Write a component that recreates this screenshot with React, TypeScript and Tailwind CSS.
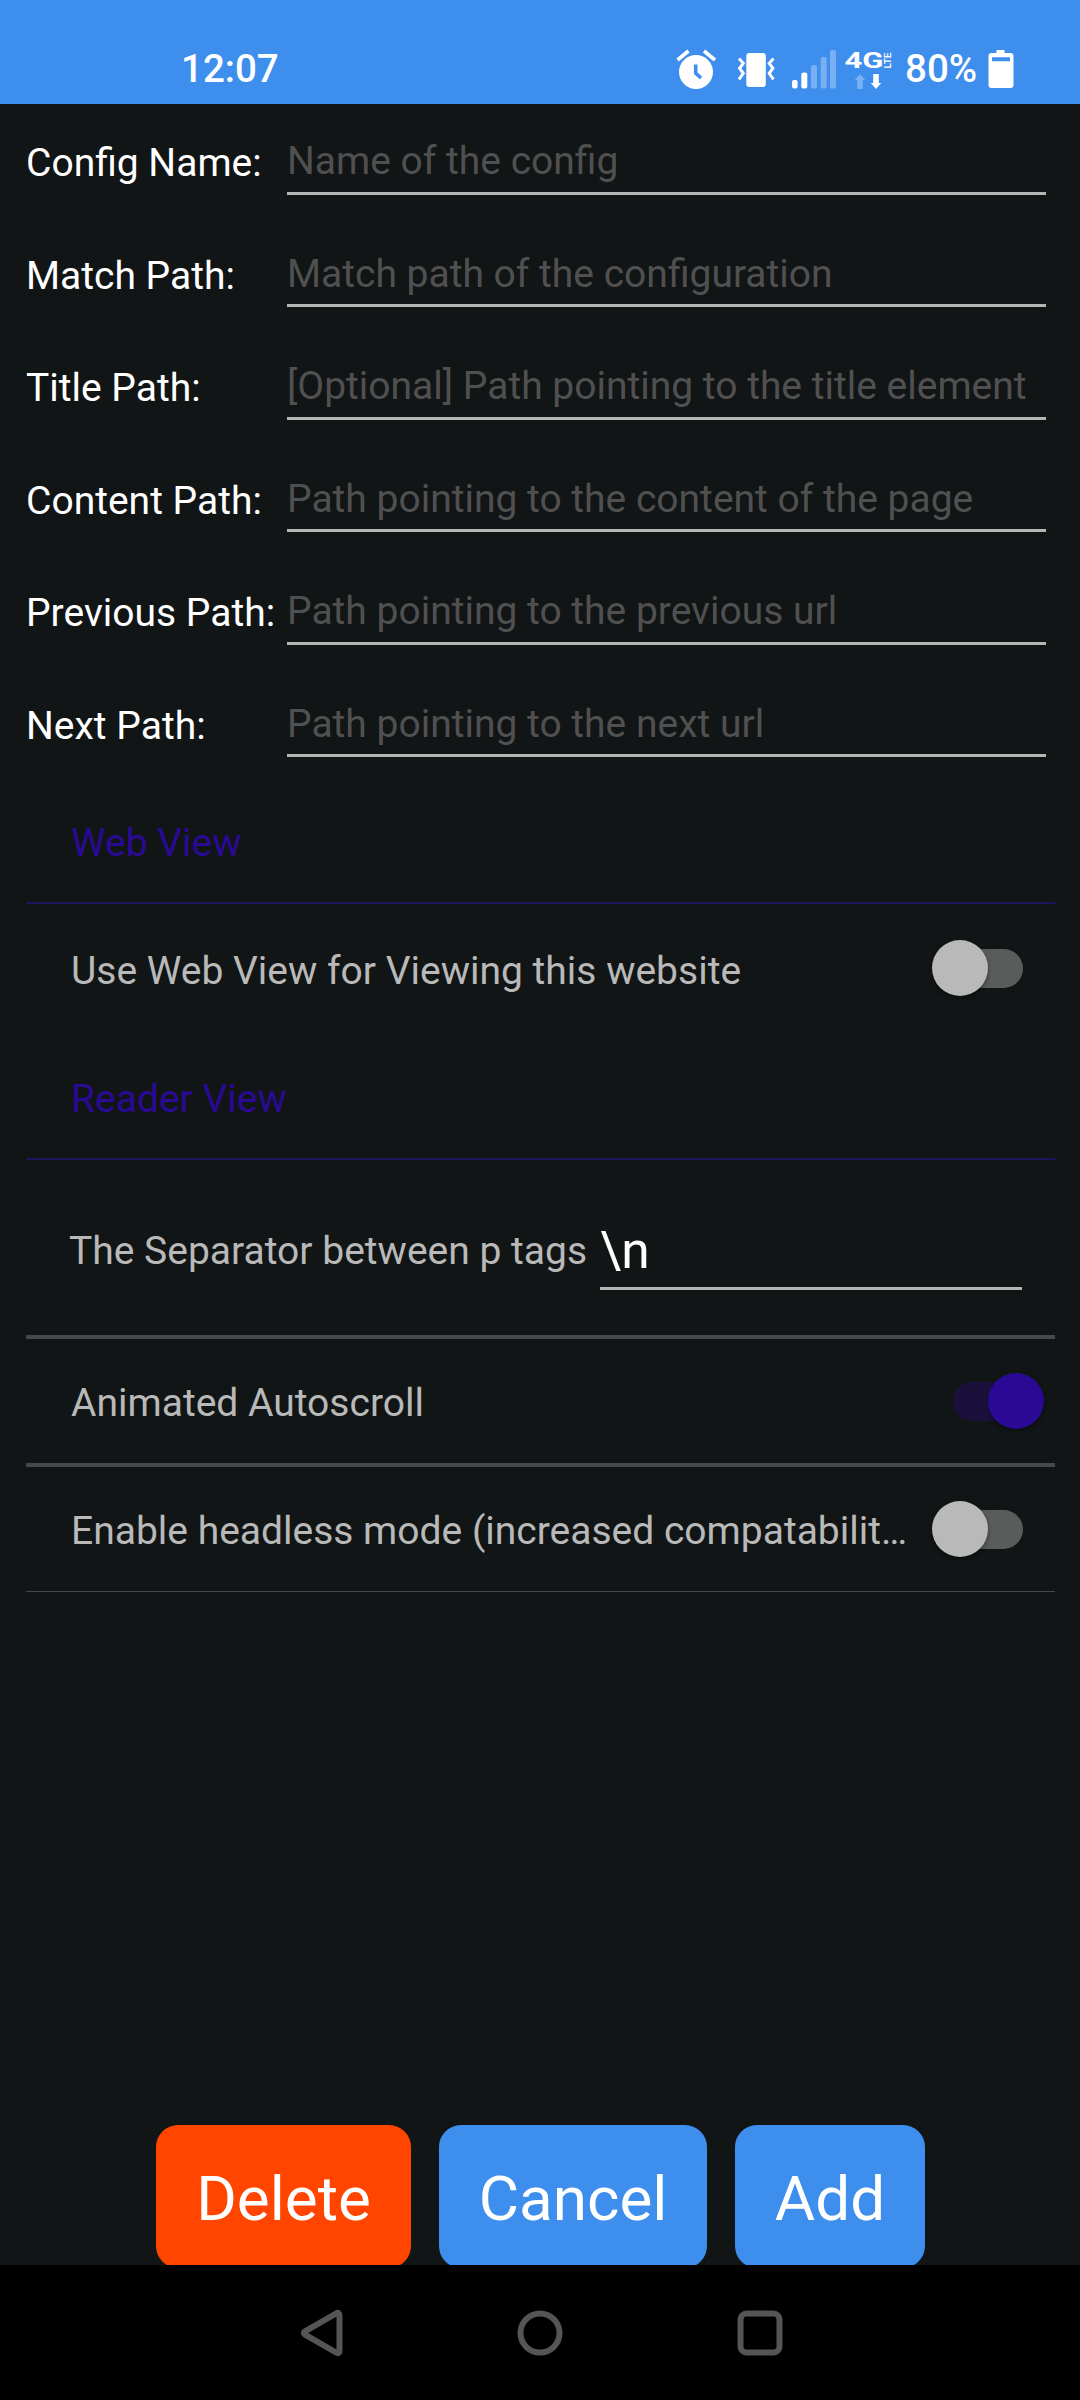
import React from "react";

const fields = [
  ["Config Name:", "Name of the config"],
  ["Match Path:", "Match path of the configuration"],
  ["Title Path:", "[Optional] Path pointing to the title element"],
  ["Content Path:", "Path pointing to the content of the page"],
  ["Previous Path:", "Path pointing to the previous url"],
  ["Next Path:", "Path pointing to the next url"],
];

function StatusIcons() {
  return (
    <svg className="block h-[104px] w-[240px]" viewBox="670 0 240 104" fill="#fff">
      {/* alarm */}
      <circle cx="696" cy="72" r="17" />
      <path d="M677.500 60 688.500 51M715 60 704 51" stroke="#fff" strokeWidth="3.6" fill="none" />
      <path d="M695.7 64.5v8.7l5.3 4.8" stroke="#3e8eed" strokeWidth="3.6" fill="none" />
      {/* vibrate */}
      <rect x="746.3" y="53" width="19.5" height="34" rx="3" />
      <path
        d="M739 58.5l4.3 4.8-3.7 5 3.7 5-4.3 6M773.5 58.5l-4.3 4.8 3.7 5-3.7 5 4.3 6"
        stroke="#fff"
        strokeWidth="3"
        fill="none"
      />
      {/* signal */}
      <rect x="792" y="80" width="5.6" height="8.5" rx="2" />
      <rect x="801.3" y="72.5" width="6" height="16" rx="2" />
      <g fill="#78b0f3">
        <rect x="811" y="65" width="6" height="23.5" rx="2" />
        <rect x="820.7" y="57" width="6" height="31.5" rx="2" />
        <rect x="830" y="50" width="6" height="38.5" rx="2" />
      </g>
      {/* network type */}
      <text x="844.5" y="68" fontSize="21.5" fontWeight="700" textLength="39" lengthAdjust="spacingAndGlyphs" fontFamily="Roboto, sans-serif">
        4G
      </text>
      <text transform="translate(891 68.5) rotate(-90)" fontSize="9.5" fontWeight="600" textLength="16" lengthAdjust="spacingAndGlyphs" fontFamily="Roboto, sans-serif">
        LTE
      </text>
      <path d="M860 74l5.2 6H862.800v9h-5.600v-9H854.800z" fill="#78b0f3" />
      <path d="M876 89l5.200-6h-2.400v-9h-5.600v9h-2.400z" />
    </svg>
  );
}

function BatteryIcon() {
  return (
    <svg className="block h-[38px] w-[26px]" viewBox="0 0 26 38" fill="#fff">
      <path
        fillRule="evenodd"
        d="M8.500 0h8v3H22.500a3 3 0 0 1 3 3V35a3 3 0 0 1-3 3H3.500a3 3 0 0 1-3-3V6a3 3 0 0 1 3-3H8.500zM4 7.300v4h18v-4z"
      />
    </svg>
  );
}

function Switch({ on = false }: { on?: boolean }) {
  return on ? (
    <div className="mr-[11px] flex h-[57px] w-[91px] items-center rounded-full">
      <div className="h-[39px] w-[70px] rounded-full bg-[#1b103c]" />
      <div className="-ml-[35px] size-[56.500px] shrink-0 rounded-full bg-[#2a0a94] shadow-[0_2px_4px_rgba(0,0,0,0.4)]" />
    </div>
  ) : (
    <div className="mr-[32px] flex h-[57px] w-[91px] items-center">
      <div className="z-10 -ml-[0.500px] size-[56.500px] shrink-0 rounded-full bg-[#b9b9b9] shadow-[0_2px_4px_rgba(0,0,0,0.4)]" />
      <div className="-ml-[35px] h-[39px] w-[70px] shrink-0 rounded-full bg-[#5a5c5b]" />
    </div>
  );
}

export default function App() {
  return (
    <div className="flex h-[2400px] w-[1080px] flex-col overflow-hidden bg-[#111516] font-['Roboto',sans-serif] text-[39px] leading-[46px] text-white">
      <header className="flex h-[104px] shrink-0 bg-[#3e8eed]">
        <div className="ml-[181px] w-[489px] pt-[46px] text-[38.500px] font-medium">12:07</div>
        <StatusIcons />
        <div className="-ml-[5px] w-[83px] pt-[46px] text-[38.500px] font-medium">80%</div>
        <div className="pt-[50px]">
          <BatteryIcon />
        </div>
      </header>

      <main className="flex h-[2161px] shrink-0 flex-col overflow-hidden pr-[25px] pl-[26px]">
        <div className="-mt-[0.25px] h-[672.25px] shrink-0">
          {fields.map(([label, hint]) => (
            <label key={label} className="flex h-[112.500px]">
              <span className="w-[261px] shrink-0 pt-[36.500px] whitespace-nowrap">{label}</span>
              <input
                placeholder={hint}
                className="h-[91px] w-[759px] border-b-[3px] border-[#b4b6b6] bg-transparent pt-[26.700px] outline-none placeholder:text-[#505050] placeholder:opacity-100"
              />
            </label>
          ))}
        </div>

        <h2 className="h-[128px] shrink-0 border-b-2 border-[#21125c] pt-[44px] pl-[45px] text-[#2a0a94]">Web View</h2>
        <div className="flex h-[128px] shrink-0 items-center justify-between pl-[45px] text-[#b9b9b9]">
          <span className="pt-[5px]">Use Web View for Viewing this website</span>
          <Switch />
        </div>

        <h2 className="h-[128px] shrink-0 border-b-2 border-[#21125c] pt-[44px] pl-[45px] text-[#2a0a94]">Reader View</h2>
        <div className="flex h-[179px] shrink-0 border-b-4 border-[#454849] pl-[43px] text-[#b9b9b9]">
          <span className="w-[531px] shrink-0 pt-[68px] whitespace-nowrap">The Separator between p tags</span>
          <input
            defaultValue="\n"
            className="h-[130px] w-[422px] border-b-[3px] border-[#b4b6b6] bg-transparent pt-[53px] text-[51.500px] text-white outline-none"
          />
        </div>
        <div className="flex h-[128px] shrink-0 items-center justify-between border-b-4 border-[#454849] pl-[45px] text-[#b9b9b9]">
          <span className="pt-[4px]">Animated Autoscroll</span>
          <Switch on />
        </div>
        <div className="flex h-[125px] shrink-0 items-center justify-between border-b border-[#454849] pl-[45px] text-[#b9b9b9]">
          <span className="pt-[4px] whitespace-nowrap">Enable headless mode (increased compatabilit…</span>
          <Switch />
        </div>

        <div className="mt-[533px] ml-[130px] flex shrink-0 gap-[28px] text-[62px] leading-[72px]">
          <button className="h-[143px] w-[255px] rounded-[22px] bg-[#ff4500] pt-[4px]">Delete</button>
          <button className="h-[143px] w-[268px] rounded-[22px] bg-[#3e8eed] pt-[4px]">Cancel</button>
          <button className="h-[143px] w-[190px] rounded-[22px] bg-[#3e8eed] pt-[4px]">Add</button>
        </div>
      </main>

      <nav className="flex h-[135px] shrink-0 items-center bg-black">
        <svg className="block h-[135px] w-full" viewBox="0 2265 1080 135" fill="none" stroke="#555" strokeWidth="6" strokeLinejoin="round">
          <path d="M339.500 2315.500Q339.500 2311.500 336 2313.500L305 2331.300Q302.500 2333 305 2334.700L336 2352.500Q339.500 2354.500 339.500 2350.500Z" />
          <circle cx="540" cy="2333" r="19.500" />
          <rect x="740.500" y="2313.500" width="39" height="39" rx="6" />
        </svg>
      </nav>
    </div>
  );
}
